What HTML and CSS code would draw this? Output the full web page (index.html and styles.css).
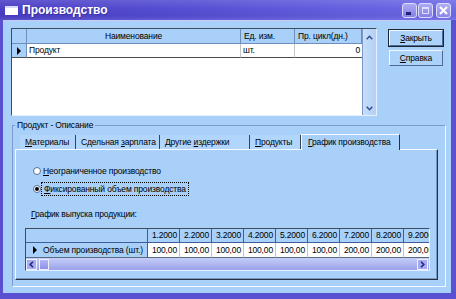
FILE: index.html
```html
<!DOCTYPE html>
<html lang="ru">
<head>
    <meta charset="UTF-8">
    <title>Производство</title>
    <link rel="stylesheet" href="styles.css">
</head>
<body>
<div class="window">

    <!-- Caption -->
    <div class="titlebar">
        <span class="app-icon"></span>
        <span class="title">Производство</span>
        <div class="caption-buttons">
            <span class="cap-btn cap-min"><i></i></span>
            <span class="cap-btn cap-max"><i></i></span>
            <span class="cap-btn cap-close">
                <svg width="9" height="9" viewBox="0 0 9 9"><path d="M1 1 L8 8 M8 1 L1 8" stroke="#fff" stroke-width="2" fill="none"/></svg>
            </span>
        </div>
    </div>

    <div class="frame">
        <div class="client">

            <div class="top-row">
                <!-- Products grid -->
                <div class="grid-top">
                    <div class="hcell ind"></div>
                    <div class="hcell center">Наименование</div>
                    <div class="hcell">Ед. изм.</div>
                    <div class="hcell">Пр. цикл(дн.)</div>
                    <div class="vscroll">
                        <svg width="7" height="5" viewBox="0 0 7 5"><path d="M0.7 4.3 L3.5 1.3 L6.3 4.3" stroke="#2c4c8c" stroke-width="1.4" fill="none"/></svg>
                        <svg width="7" height="5" viewBox="0 0 7 5"><path d="M0.7 0.7 L3.5 3.7 L6.3 0.7" stroke="#2c4c8c" stroke-width="1.4" fill="none"/></svg>
                    </div>
                    <div class="cell ind"><span class="row-mark"></span></div>
                    <div class="cell">Продукт</div>
                    <div class="cell">шт.</div>
                    <div class="cell num">0</div>
                    <div class="grid-empty"></div>
                </div>

                <div class="side-buttons">
                    <button class="btn default"><u>З</u>акрыть</button>
                    <button class="btn"><u>С</u>правка</button>
                </div>
            </div>

            <fieldset class="group">
                <legend>Продукт - Описание</legend>

                <div class="tabs">
                    <div class="tab" style="width: 56px"><u>М</u>атериалы</div>
                    <div class="tab" style="width: 84px">Сдельная <u>з</u>арплата</div>
                    <div class="tab" style="width: 90px">Другие <u>и</u>здержки</div>
                    <div class="tab" style="width: 51px"><u>П</u>родукты</div>
                    <div class="tab active" style="width: 99px"><u>Г</u>рафик производства</div>
                </div>

                <div class="panel">
                    <div class="radio">
                        <span class="radio-dot"></span>
                        <span><u>Н</u>еограниченное производство</span>
                    </div>
                    <div class="radio second">
                        <span class="radio-dot checked"></span>
                        <span class="focused"><u>Ф</u>иксированный объем производства</span>
                    </div>

                    <div class="plan-label"><u>Г</u>рафик выпуска продукции:</div>

                    <!-- Production plan grid -->
                    <div class="grid-plan">
                        <div class="plan-rows">
                            <div class="ph"></div>
                            <div class="ph">1.2000</div>
                            <div class="ph">2.2000</div>
                            <div class="ph">3.2000</div>
                            <div class="ph">4.2000</div>
                            <div class="ph">5.2000</div>
                            <div class="ph">6.2000</div>
                            <div class="ph">7.2000</div>
                            <div class="ph">8.2000</div>
                            <div class="ph">9.2000</div>

                            <div class="pd first"><span class="row-mark"></span>Объем производства (шт.)</div>
                            <div class="pd">100,00</div>
                            <div class="pd">100,00</div>
                            <div class="pd">100,00</div>
                            <div class="pd">100,00</div>
                            <div class="pd">100,00</div>
                            <div class="pd">100,00</div>
                            <div class="pd">200,00</div>
                            <div class="pd">200,00</div>
                            <div class="pd">200,00</div>
                        </div>
                        <div class="hscroll">
                            <span class="sbtn">
                                <svg width="5" height="7" viewBox="0 0 5 7"><path d="M4 0.7 L1.2 3.5 L4 6.3" stroke="#1c2c7c" stroke-width="1.6" fill="none"/></svg>
                            </span>
                            <span class="thumb"></span>
                            <span class="sbtn right">
                                <svg width="5" height="7" viewBox="0 0 5 7"><path d="M1 0.7 L3.8 3.5 L1 6.3" stroke="#1c2c7c" stroke-width="1.6" fill="none"/></svg>
                            </span>
                        </div>
                    </div>
                </div>
            </fieldset>

        </div>
    </div>
</div>
</body>
</html>
```

FILE: styles.css
```css
/* Page */
body {
    margin: 0;
    font-family: "Liberation Sans", Arial, sans-serif;
    font-size: 8.5px;
    letter-spacing: -0.15px;
    color: #000;
    background: #a8d0f8;
}

u {
    text-decoration: underline;
    text-underline-offset: 1px;
}

/* Window shell */
.window {
    width: 456px;
    height: 299px;
    display: flex;
    flex-direction: column;
    background: #5a51d2;
}

.titlebar {
    height: 20px;
    flex: none;
    display: flex;
    align-items: center;
    padding: 0 5px;
    box-sizing: border-box;
    color: #fff;
    background:
        linear-gradient(to bottom, rgba(255, 255, 255, 0.12), rgba(255, 255, 255, 0) 45%, rgba(0, 0, 0, 0.04) 80%, rgba(255, 255, 255, 0.08)),
        linear-gradient(to right, #4a3ec4, #5750d4 45%, #6d6ae6);
}

.app-icon {
    width: 13px;
    height: 9px;
    box-sizing: border-box;
    background: #fff;
    border-top: 2px solid #d6dcff;
    margin: 1px 4px 0 0;
}

.title {
    font-size: 12px;
    font-weight: bold;
    letter-spacing: 0;
    text-shadow: 1px 1px 0 #3a2fa8;
}

.caption-buttons {
    margin-left: auto;
    display: flex;
    gap: 1px;
    padding-top: 1px;
}

.cap-btn {
    width: 15px;
    height: 15px;
    box-sizing: border-box;
    border: 1px solid #dcdcff;
    border-radius: 3px;
    background: linear-gradient(#aeaaf4, #8580e4);
    display: flex;
    align-items: center;
    justify-content: center;
}

.cap-min {
    align-items: flex-end;
    justify-content: flex-start;
}

.cap-min i {
    width: 5px;
    height: 3px;
    background: #1e2470;
    margin: 0 0 2px 3px;
}

.cap-max i {
    width: 7px;
    height: 7px;
    box-sizing: border-box;
    border: 1px solid #dde0ff;
    border-top-width: 2px;
}

.cap-close {
    margin-left: 2px;
    background: linear-gradient(#b4b0f6, #8a86e8);
}

.frame {
    flex: 1;
    display: flex;
    padding: 0 5px 6px 3px;
}

.client {
    flex: 1;
    background: #a8d0f8;
    border-top: 1px solid #c6caf6;
    padding: 7px 5px 0 8px;
}

/* Top grid + buttons */
.top-row {
    display: flex;
    height: 88px;
}

.grid-top {
    width: 366px;
    box-sizing: border-box;
    border: 1px solid;
    border-color: #3e4c60 #e4f0ff #e4f0ff #3e4c60;
    background: #fff;
    display: grid;
    grid-template-columns: 15px 214px 54px 67px 14px;
    grid-template-rows: 15px 14px 1fr;
}

.hcell {
    background: #a8d0f8;
    border-right: 1px solid #6e8fbe;
    border-bottom: 1px solid #6e8fbe;
    line-height: 14px;
    padding: 0 3px;
    white-space: nowrap;
    overflow: hidden;
}

.hcell.center {
    text-align: center;
}

.cell {
    border-right: 1px solid #c4c4c4;
    border-bottom: 1px solid #4a4a4a;
    line-height: 13px;
    padding: 0 2px;
    white-space: nowrap;
}

.cell.num {
    text-align: right;
    border-right: none;
}

.ind {
    padding: 0;
    display: flex;
    align-items: center;
    justify-content: center;
}

.cell.ind {
    background: #a8d0f8;
    border-right-color: #6e8fbe;
}

.row-mark {
    width: 0;
    height: 0;
    flex: none;
    border-left: 4px solid #000;
    border-top: 4px solid transparent;
    border-bottom: 4px solid transparent;
}

.grid-empty {
    grid-column: 1 / 5;
}

.vscroll {
    grid-column: 5;
    grid-row: 1 / 4;
    background: linear-gradient(to right, #c8def9, #b2cff6);
    border-left: 1px solid #7b98c6;
    display: flex;
    flex-direction: column;
    justify-content: space-between;
    align-items: center;
    padding: 6px 0 4px;
}

.side-buttons {
    margin-left: 12px;
    padding-top: 2px;
    display: flex;
    flex-direction: column;
    gap: 4px;
}

.btn {
    width: 54px;
    height: 16px;
    padding: 0;
    font: inherit;
    letter-spacing: inherit;
    color: #000;
    background: #acd2fa;
    border: 1px solid;
    border-color: #f0f8ff #4e6a94 #4e6a94 #f0f8ff;
}

.btn.default {
    box-shadow: 0 0 0 1px #1c2434;
}

/* Group box with tabs */
.group {
    margin: 4px 0 0 1px;
    padding: 3px 7px 6px 2px;
    border: 1px solid;
    border-color: #7f9dc8 #f4faff #f4faff #7f9dc8;
    min-width: 0;
}

.group legend {
    padding: 0 2px;
    line-height: 11px;
}

.tabs {
    display: flex;
    align-items: flex-end;
    height: 15px;
    padding-left: 5px;
}

.tab {
    height: 14px;
    line-height: 14px;
    box-sizing: border-box;
    padding-left: 5px;
    border-right: 1px solid #3a4450;
    background: #b2d6fb;
    white-space: nowrap;
    overflow: hidden;
}

.tab.active {
    height: 16px;
    margin-bottom: -1px;
    padding-left: 6px;
    line-height: 15px;
    background: #a8d0f8;
    border-top: 1px solid #f4faff;
    border-left: 1px solid #f4faff;
    border-right: 1px solid #28323e;
    position: relative;
    z-index: 1;
}

.panel {
    height: 131px;
    box-sizing: border-box;
    border: 1px solid;
    border-color: #f4faff #28323e #28323e #f4faff;
    box-shadow: inset -1px -1px 0 #7898c4;
    padding: 14px 0 0 9px;
}

.radio {
    display: flex;
    align-items: center;
    gap: 2px;
    height: 13px;
    margin-left: 8px;
}

.radio.second {
    margin-top: 5px;
}

.radio-dot {
    width: 8px;
    height: 8px;
    box-sizing: border-box;
    border-radius: 50%;
    background: #fff;
    border: 1px solid #5a6f94;
    display: flex;
    align-items: center;
    justify-content: center;
}

.radio-dot.checked::after {
    content: "";
    width: 4px;
    height: 4px;
    border-radius: 50%;
    background: #000;
}

.focused {
    outline: 1px dotted #000;
    outline-offset: 1px;
    padding: 0 1px;
}

.plan-label {
    margin: 14px 0 0 6px;
    line-height: 11px;
}

/* Plan grid */
.grid-plan {
    width: 405px;
    height: 43px;
    margin-top: 8px;
    box-sizing: border-box;
    border: 1px solid;
    border-color: #3e4c60 #e4f0ff #e4f0ff #3e4c60;
    overflow: hidden;
    display: flex;
    flex-direction: column;
}

.plan-rows {
    display: grid;
    grid-template-columns: 122px repeat(9, 32px);
    grid-template-rows: 14px 15px;
}

.ph {
    background: #a8d0f8;
    border-right: 1px solid #3f5f9c;
    border-bottom: 1px solid #3f5f9c;
    line-height: 13px;
    text-align: right;
    padding-right: 2px;
    white-space: nowrap;
    overflow: hidden;
}

.pd {
    background: #fff;
    border-right: 1px solid #c0c0c0;
    border-bottom: 1px solid #5a6a80;
    line-height: 14px;
    text-align: right;
    padding-right: 2px;
    white-space: nowrap;
    overflow: hidden;
}

.pd.first {
    background: #a8d0f8;
    border-right-color: #3f5f9c;
    text-align: left;
    padding: 0 0 0 7px;
    display: flex;
    align-items: center;
    gap: 6px;
}

.hscroll {
    flex: 1;
    display: flex;
    align-items: center;
    gap: 2px;
    background: linear-gradient(#c4cef8, #9ca2ea);
}

.sbtn {
    width: 11px;
    height: 11px;
    box-sizing: border-box;
    border: 1px solid #eef0ff;
    background: #a8aaf2;
    display: flex;
    align-items: center;
    justify-content: center;
}

.sbtn.right {
    margin: 0 1px 0 auto;
}

.thumb {
    width: 10px;
    height: 11px;
    box-sizing: border-box;
    border: 1px solid #eef0ff;
    background: linear-gradient(#b4b6f6, #8c90e6);
}
```
